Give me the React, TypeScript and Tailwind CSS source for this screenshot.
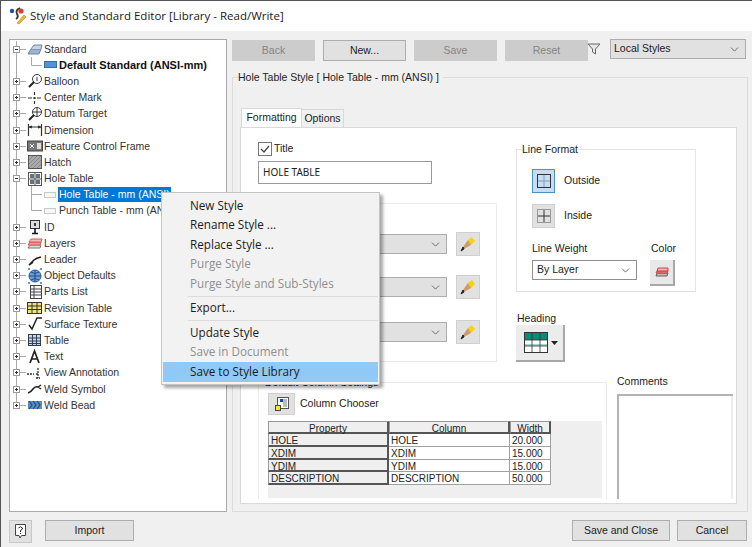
import { ChevronDown } from 'lucide-react';
import type { ReactNode } from 'react';

const ink = '#3a3a3a';

function Ico({ children, w = 16 }: { children: ReactNode; w?: number }) {
  return (
    <svg width={w} height="16" viewBox={`0 0 ${w} 16`} className="shrink-0" fill="none">
      {children}
    </svg>
  );
}

const treeIcons: Record<string, ReactNode> = {
  standard: (
    <>
      <path d="M1 13 L4 8 H14 L12 13 Z" fill="#9db4cc" stroke="#6f87a0" />
      <path d="M4 8 L7 4 H15 L14 8" fill="#c5d3e2" stroke="#6f87a0" />
    </>
  ),
  default: <rect x="0.5" y="4.5" width="12" height="6" fill="#4f94d4" stroke="#3a6ea5" />,
  balloon: (
    <>
      <circle cx="10" cy="6" r="4.5" fill="#fff" stroke={ink} />
      <path d="M10 4 V8" stroke={ink} />
      <path d="M7 9 L2 14" stroke="#222" strokeWidth="2" />
    </>
  ),
  center: <path d="M7.5 2 V5 M7.5 7 V9 M7.5 11 V14 M1 8 H5 M6 8 H9 M10 8 H14" stroke="#333" strokeWidth="1.2" />,
  datum: (
    <>
      <circle cx="10" cy="6" r="4.5" fill="#fff" stroke={ink} />
      <path d="M5.5 6 H14.5 M10 1.5 V10.5" stroke={ink} />
      <path d="M7 9 L2 14" stroke="#222" strokeWidth="2" />
    </>
  ),
  dimension: <path d="M1.5 2 V14 M14.5 2 V14 M2 5 H14 M2 5 L5 4 M2 5 L5 6 M14 5 L11 4 M14 5 L11 6" stroke="#333" strokeWidth="1.2" />,
  fcf: (
    <>
      <rect x="0.5" y="3" width="15" height="10" fill="#777" stroke="#444" />
      <path d="M3 6 L7 10 M7 6 L3 10" stroke="#fff" />
      <rect x="10" y="5" width="4" height="6" fill="#ddd" />
    </>
  ),
  hatch: (
    <>
      <rect x="1.5" y="1.5" width="13" height="13" fill="#aaa" stroke="#555" />
      <path d="M2 6 L6 2 M2 10 L10 2 M2 14 L14 2 M6 14 L14 6 M10 14 L14 10" stroke="#888" />
    </>
  ),
  hole: (
    <>
      <rect x="1.5" y="1.5" width="13" height="13" fill="#fff" stroke="#555" />
      <path d="M8 2 V14 M2 8 H14" stroke="#555" />
      <path d="M3 4 H7 M3 6 H7 M9 4 H13 M9 6 H13 M3 10 H7 M3 12 H7 M9 10 H13 M9 12 H13" stroke="#345" strokeWidth="1.3" />
    </>
  ),
  sub: <rect x="0.5" y="5.5" width="11" height="5" fill="#f6f6f6" stroke="#c9c9c9" />,
  id: (
    <>
      <rect x="3.5" y="1.5" width="9" height="8" fill="#ddd" stroke="#333" />
      <path d="M8 4 V7 M8 9 V14 M5 14.5 H11" stroke="#111" strokeWidth="1.6" />
    </>
  ),
  layers: (
    <>
      <path d="M1 13 L3 10 H14 L13 13 Z" fill="#ddd" stroke="#777" />
      <path d="M1 10 L3 7 H14 L13 10 Z" fill="#ee9a9a" stroke="#d55" />
      <path d="M2 7 L4 4 H15 L14 7 Z" fill="#f3b9b9" stroke="#d55" />
    </>
  ),
  leader: <path d="M2 13 Q5 10 7 8 T14 5 M2 13 L6 10" stroke="#222" strokeWidth="1.6" />,
  object: (
    <>
      <circle cx="8" cy="8" r="6" fill="#6d9fd6" stroke="#2c5f9e" />
      <path d="M2 8 H14 M8 2 V14 M4 4 Q8 7 12 4 M4 12 Q8 9 12 12" stroke="#244e85" />
      <path d="M1 1 H3 M13 1 H15 M1 15 H3 M13 15 H15" stroke="#3d78c0" strokeWidth="1.5" />
    </>
  ),
  parts: (
    <>
      <rect x="3.5" y="1.5" width="11" height="13" fill="#fff" stroke="#444" />
      <path d="M3 5 H15 M3 8 H15 M3 11 H15 M7 2 V14" stroke="#444" />
    </>
  ),
  revision: (
    <>
      <rect x="0.5" y="2.5" width="14" height="11" fill="#f3e27a" stroke="#333" />
      <path d="M1 6 H14 M1 9.5 H14 M5 3 V13 M10 3 V13" stroke="#333" />
    </>
  ),
  surface: <path d="M2 9 L5 13 L10 2 H15" stroke="#222" strokeWidth="1.5" />,
  table: (
    <>
      <rect x="1.5" y="2.5" width="12" height="11" fill="#cfd8e6" stroke="#2f3f55" />
      <path d="M2 6 H13 M2 9 H13 M2 11.5 H13 M5.5 3 V13 M9.5 3 V13" stroke="#2f3f55" />
    </>
  ),
  text: <path d="M3 14 L7.5 2 L12 14 M5 10 H10" stroke="#222" strokeWidth="1.7" />,
  view: <path d="M0 9 H7 M9 9 H11 M11 3 V13 M9 13 H13" stroke="#333" strokeDasharray="2 1" strokeWidth="1.3" />,
  weld: <path d="M1 12 Q4 11 6 8 T11 6 L14 4 M11 6 L14 8" stroke="#222" strokeWidth="1.5" />,
  bead: (
    <>
      <rect x="1" y="4" width="14" height="8" fill="#5b8bbf" />
      <path d="M2 4 L5 8 L2 12 M6 4 L9 8 L6 12 M10 4 L13 8 L10 12" stroke="#1f4d80" strokeWidth="1.2" />
    </>
  ),
};

const treeRows = [
  { label: 'Standard', icon: 'standard', open: true },
  { label: 'Default Standard (ANSI-mm)', icon: 'default', child: true, bold: true },
  { label: 'Balloon', icon: 'balloon' },
  { label: 'Center Mark', icon: 'center' },
  { label: 'Datum Target', icon: 'datum' },
  { label: 'Dimension', icon: 'dimension' },
  { label: 'Feature Control Frame', icon: 'fcf' },
  { label: 'Hatch', icon: 'hatch' },
  { label: 'Hole Table', icon: 'hole', open: true },
  { label: 'Hole Table - mm (ANSI)', icon: 'sub', child: true, selected: true, more: true },
  { label: 'Punch Table - mm (ANSI)', icon: 'sub', child: true, lastChild: true },
  { label: 'ID', icon: 'id' },
  { label: 'Layers', icon: 'layers' },
  { label: 'Leader', icon: 'leader' },
  { label: 'Object Defaults', icon: 'object' },
  { label: 'Parts List', icon: 'parts' },
  { label: 'Revision Table', icon: 'revision' },
  { label: 'Surface Texture', icon: 'surface' },
  { label: 'Table', icon: 'table' },
  { label: 'Text', icon: 'text' },
  { label: 'View Annotation', icon: 'view' },
  { label: 'Weld Symbol', icon: 'weld' },
  { label: 'Weld Bead', icon: 'bead', last: true },
];

type TreeRowData = (typeof treeRows)[number] & {
  open?: boolean;
  child?: boolean;
  bold?: boolean;
  selected?: boolean;
  more?: boolean;
  last?: boolean;
  lastChild?: boolean;
};

function TreeRow({ row }: { row: TreeRowData }) {
  return (
    <div className="flex h-[16.2px] items-center">
      {row.child ? (
        <svg width="33" height="17" viewBox="0 0 33 17" className="shrink-0" fill="none">
          <path d="M6.5 0 V17" stroke="#a9a9a9" />
          <path d={`M21.5 0 V${row.lastChild || row.bold ? 8.5 : 17} M21.5 8.5 H32`} stroke="#a9a9a9" />
        </svg>
      ) : (
        <svg width="17" height="17" viewBox="0 0 17 17" className="shrink-0" fill="none">
          <path d={row.last ? 'M6.5 0 V8.5 M9.5 8.5 H16' : 'M6.5 0 V17 M9.5 8.5 H16'} stroke="#a9a9a9" />
          <rect x="3.5" y="5.5" width="6" height="6" fill="#fff" stroke="#9a9a9a" />
          <path d={row.open ? 'M5 8.5 H8' : 'M5 8.5 H8 M6.5 7 V10'} stroke="#333" />
        </svg>
      )}
      {row.child ? (
        <span className="ml-[1px] mr-[1px] w-[13px]">
          <Ico w={13}>{treeIcons[row.icon]}</Ico>
        </span>
      ) : (
        <Ico>{treeIcons[row.icon]}</Ico>
      )}
      <span
        className={`whitespace-nowrap px-[1px] leading-[15px] ${row.bold ? 'text-[11px] font-bold text-[#111]' : 'text-[10.5px] text-[#333]'} ${row.selected ? 'bg-[#0078d7] text-white' : ''}`}
      >
        {row.label}
      </span>
    </div>
  );
}

function TopButton({ label, enabled }: { label: string; enabled?: boolean }) {
  return (
    <button
      className={`flex h-[21px] w-[83px] items-center justify-center border text-[10.5px] ${enabled ? 'border-[#adadad] bg-[#e1e1e1] text-[#222]' : 'border-[#cccccc] bg-[#cccccc] text-[#858585]'}`}
    >
      {label}
    </button>
  );
}

function Btn({ label, className }: { label: string; className: string }) {
  return (
    <button className={`flex h-[21px] items-center justify-center border border-[#adadad] bg-[#e1e1e1] text-[10.5px] text-[#222] ${className}`}>
      {label}
    </button>
  );
}

function Pencil() {
  return (
    <button className="flex h-[24px] w-[24px] items-center justify-center border border-[#d0d0d0] bg-[#e1e1e1]">
      <svg width="16" height="16" viewBox="0 0 16 16" fill="none">
        <path d="M8 4 L12 1 L15 5 L11 9 Z" fill="#f7d500" />
        <path d="M8 4 L11 9 L4 13 L3 11 Z" fill="#cf9a6b" />
        <path d="M3 11 L4 13 L1 15 Z" fill="#222" stroke="#222" />
      </svg>
    </button>
  );
}

function GreyDropdown() {
  return (
    <div className="flex h-[20px] w-[68px] items-center justify-end border border-[#adadad] bg-[#e1e1e1] pr-[4px]">
      <ChevronDown size={13} strokeWidth={1.5} className="text-[#555]" />
    </div>
  );
}

function GridIcon({ inside }: { inside?: boolean }) {
  return (
    <svg width="16" height="16" viewBox="0 0 16 16" fill="none">
      <rect x="1.5" y="1.5" width="13" height="13" stroke={inside ? '#9a9a9a' : '#333'} />
      <path d="M8 2 V14 M2 8 H14" stroke={inside ? '#333' : '#8b9db0'} />
    </svg>
  );
}

const columnRows = [
  ['HOLE', 'HOLE', '20.000'],
  ['XDIM', 'XDIM', '15.000'],
  ['YDIM', 'YDIM', '15.000'],
  ['DESCRIPTION', 'DESCRIPTION', '50.000'],
];

function ColumnTable() {
  return (
    <div className="h-[77px] w-[334px] bg-[#efefef]">
      <div className="grid w-[283px] grid-cols-[121px_121px_41px] text-[10px] leading-[14px] text-[#222]">
        {['Property', 'Column', 'Width'].map((h) => (
          <div key={h} className="h-[13px] border-b-2 border-r-2 border-t border-l border-b-[#555] border-r-[#555] border-t-[#999] border-l-[#999] bg-[#efefef] text-center">
            {h}
          </div>
        ))}
        {columnRows.map((row) => (
          <div key={row[0]} className="contents">
            <div className="h-[12.75px] border-b-2 border-r-2 border-l border-b-[#555] border-r-[#555] border-l-[#999] bg-[#efefef] pl-[2px]">{row[0]}</div>
            <div className="h-[12.75px] border-b border-r border-[#a0a0a0] bg-white pl-[2px]">{row[1]}</div>
            <div className="h-[12.75px] border-b border-r border-[#a0a0a0] bg-white pl-[2px]">{row[2]}</div>
          </div>
        ))}
      </div>
    </div>
  );
}

const menuItems = ['New Style', 'Rename Style ...', 'Replace Style ...'];

function MenuItem({ label, disabled }: { label: string; disabled?: boolean }) {
  return (
    <div className={`flex h-[19.5px] items-center pl-[27px] text-[11.7px] ${disabled ? 'text-[#8f8f8f]' : 'text-[#1c1c1c]'}`}>{label}</div>
  );
}

function MenuSep() {
  return <div className="my-[2px] ml-[25px] h-px bg-[#dcdcdc]" />;
}

function ContextMenu() {
  return (
    <div className="absolute left-[160px] top-[191px] w-[219px] border border-[#c4c4c4] bg-[#f2f2f2] pb-[2px] pl-[1px] pr-[1px] pt-[3px] shadow-[3px_3px_3px_rgba(0,0,0,0.35)]" style={{ fontFamily: '"Open Sans", sans-serif' }}>
      {menuItems.map((m) => (
        <MenuItem key={m} label={m} />
      ))}
      <MenuItem label="Purge Style" disabled />
      <MenuItem label="Purge Style and Sub-Styles" disabled />
      <MenuSep />
      <MenuItem label="Export..." />
      <MenuSep />
      <MenuItem label="Update Style" />
      <MenuItem label="Save in Document" disabled />
      <div className="flex h-[19.5px] items-center bg-[#90c8f6] pl-[27px] text-[11.7px] text-[#1c1c1c]">Save to Style Library</div>
    </div>
  );
}

export default function App() {
  return (
    <div className="relative flex h-[547px] w-[752px] flex-col overflow-hidden border-l border-t border-[#555] bg-[#f0f0f0] text-[#222]" style={{ fontFamily: '"Liberation Sans", sans-serif' }}>
      <div className="flex h-[30px] items-center bg-white pl-[8px]">
        <svg width="18" height="20" viewBox="0 0 18 20" fill="none">
          <circle cx="3" cy="5" r="2.2" fill="#1f4e9c" />
          <path d="M11 2 Q6 4 8 8 Q10 11 7 13" stroke="#333" strokeWidth="1.8" />
          <circle cx="12" cy="5" r="2.6" fill="#e23b2e" />
          <path d="M8 17 L15 9 L17 11 L10 18 Z" fill="#f2b632" stroke="#b97f1b" strokeWidth="0.6" />
        </svg>
        <span className="ml-[3px] whitespace-nowrap text-[11.5px] text-[#1a1a1a]" style={{ fontFamily: '"Open Sans", sans-serif' }}>
          Style and Standard Editor [Library - Read/Write]
        </span>
      </div>

      <div className="flex h-[481px] pl-[8px] pt-[8px]">
        <div className="h-[473px] w-[218px] border border-[#a9a9a9] bg-white pt-[1px]">
          {treeRows.map((row) => (
            <TreeRow key={row.label} row={row as TreeRowData} />
          ))}
        </div>

        <div className="ml-[5px] w-[516px]">
          <div className="flex h-[23px] items-start">
            <div className="mt-[1px] flex gap-[8px]">
              <TopButton label="Back" />
              <TopButton label="New..." enabled />
              <TopButton label="Save" />
              <TopButton label="Reset" />
            </div>
            <svg width="14" height="14" viewBox="0 0 14 14" fill="none" className="ml-[-1px] mt-[3px]">
              <path d="M1 2 H13 L8.5 7 V12 L5.5 10 V7 Z" fill="#e8e8e8" stroke="#666" />
            </svg>
            <div className="ml-[9px] flex h-[20px] w-[136px] items-center justify-between border border-[#adadad] bg-[#e1e1e1] pl-[3px] pr-[4px] text-[10.5px]">
              Local Styles
              <ChevronDown size={13} strokeWidth={1.5} className="text-[#555]" />
            </div>
          </div>

          <fieldset className="mt-[8px] h-[442px] border border-[#dcdcdc] pl-[5px]">
            <legend className="h-[14px] pr-[4px] text-[10.5px] leading-[14px] text-[#222]">Hole Table Style [ Hole Table - mm (ANSI) ]</legend>

            <div className="ml-[2px] mt-[23px] flex h-[20px] items-end pl-[1px]">
              <div className="flex h-[19px] w-[61px] items-center justify-center border-x border-t border-[#d9d9d9] bg-white pb-[1px] text-[10.5px]">Formatting</div>
              <div className="flex h-[18px] w-[42px] items-center justify-center border-r border-t border-[#d9d9d9] text-[10.5px]">Options</div>
            </div>
            <div className="ml-[2px] h-[377px] w-[497px] border border-[#d9d9d9] bg-white">
              <div className="h-[371px] overflow-hidden pl-[17px] pt-[14px]">
                <div className="flex h-[233px]">
                  <div className="w-[239px]">
                    <div className="flex h-[14px] items-center">
                      <span className="flex h-[14px] w-[14px] items-center justify-center border border-[#777]">
                        <svg width="10" height="10" viewBox="0 0 10 10" fill="none">
                          <path d="M1 5 L4 8 L9 2" stroke="#444" strokeWidth="1.2" />
                        </svg>
                      </span>
                      <span className="ml-[2px] text-[10.5px]">Title</span>
                    </div>
                    <div className="mt-[5px] flex h-[23px] w-[174px] items-center border border-[#9a9a9a] pl-[4px] text-[10px]" style={{ fontFamily: '"Noto Sans", sans-serif' }}>HOLE TABLE</div>
                    <div className="mt-[19px] flex h-[159px] flex-col items-end border border-[#ececec] pr-[16px]">
                      <div className="mt-[28px] flex items-center gap-[9px]">
                        <GreyDropdown />
                        <Pencil />
                      </div>
                      <div className="mt-[19px] flex items-center gap-[9px]">
                        <GreyDropdown />
                        <Pencil />
                      </div>
                      <div className="mt-[21px] flex items-center gap-[9px]">
                        <GreyDropdown />
                        <Pencil />
                      </div>
                    </div>
                  </div>

                  <div className="ml-[19px] w-[180px]">
                    <fieldset className="h-[150px] border border-[#e4e4e4] pl-[5px]">
                      <legend className="h-[14px] text-[10.5px] leading-[14px]">Line Format</legend>
                      <div className="ml-[10px] mt-[13px] flex items-center">
                        <span className="flex h-[24px] w-[23px] items-center justify-center border border-[#4d90c8] bg-[#c5def5]">
                          <GridIcon />
                        </span>
                        <span className="ml-[9px] text-[10.5px]">Outside</span>
                      </div>
                      <div className="ml-[10px] mt-[11px] flex items-center">
                        <span className="flex h-[24px] w-[23px] items-center justify-center border border-[#cfcfcf] bg-[#e1e1e1]">
                          <GridIcon inside />
                        </span>
                        <span className="ml-[9px] text-[10.5px]">Inside</span>
                      </div>
                      <div className="ml-[10px] mt-[13px] flex">
                        <div className="w-[118px]">
                          <div className="h-[14px] text-[10.5px] leading-[14px]">Line Weight</div>
                          <div className="mt-[5px] flex h-[20px] w-[105px] items-center justify-between border border-[#8f8f8f] pl-[4px] pr-[4px] text-[10.5px]">
                            By Layer
                            <ChevronDown size={13} strokeWidth={1.5} className="text-[#555]" />
                          </div>
                        </div>
                        <div>
                          <div className="h-[14px] pl-[1px] text-[10.5px] leading-[14px]">Color</div>
                          <div className="mt-[5px] flex h-[26px] w-[25px] items-center justify-center border-b-2 border-r-2 border-[#a8a8a8] bg-[#e8e8e8]">
                            <svg width="14" height="12" viewBox="0 0 14 12" fill="none">
                              <path d="M1 10 L2 7 H13 L12 10 Z" fill="#bbb" stroke="#666" />
                              <path d="M1 7 L2 5 H13 L12 7 Z" fill="#e88" stroke="#c44" />
                              <path d="M2 5 L3 2 H13 L13 5 Z" fill="#f2b5b5" stroke="#c44" />
                            </svg>
                          </div>
                        </div>
                      </div>
                    </fieldset>
                    <div className="mt-[19px] h-[14px] pl-[1px] text-[10.5px] leading-[14px]">Heading</div>
                    <div className="flex h-[37px] w-[49px] items-center gap-[3px] border-b-2 border-r-2 border-[#a8a8a8] bg-[#ececec] pl-[8px]">
                      <svg width="24" height="22" viewBox="0 0 24 22" fill="none">
                        <rect x="0.5" y="0.5" width="23" height="20" fill="#fff" stroke="#333" />
                        <rect x="1" y="1" width="22" height="7" fill="#0c8a78" />
                        <rect x="1" y="12" width="22" height="2" fill="#9fd4cc" />
                        <path d="M8 1 V20 M16 1 V20 M1 8 H23 M1 14 H23" stroke="#333" strokeWidth="0.8" />
                      </svg>
                      <svg width="7" height="4" viewBox="0 0 7 4">
                        <path d="M0 0 H7 L3.5 4 Z" fill="#222" />
                      </svg>
                    </div>
                  </div>
                </div>

                <div className="flex">
                  <fieldset className="h-[130px] w-[349px] shrink-0 border border-[#ececec] pl-[6px]">
                    <legend className="h-[14px] text-[10.5px] leading-[14px]">Default Column Settings</legend>
                    <div className="ml-[3px] mt-[4px] flex items-center">
                      <span className="flex h-[22px] w-[27px] items-center justify-center border border-[#cfcfcf] bg-[#e1e1e1]">
                        <svg width="16" height="16" viewBox="0 0 16 16" fill="none">
                          <rect x="3.5" y="1.5" width="11" height="11" fill="#fff" stroke="#555" />
                          <rect x="6" y="3" width="3" height="3" fill="#1e40c8" />
                          <path d="M10 3 V11 M12 3 V11" stroke="#777" />
                          <rect x="1.5" y="9.5" width="5" height="5" fill="#f5e14a" stroke="#444" />
                        </svg>
                      </span>
                      <span className="ml-[5px] text-[10.5px]">Column Chooser</span>
                    </div>
                    <div className="ml-[3px] mt-[6px]">
                      <ColumnTable />
                    </div>
                  </fieldset>
                  <div className="ml-[10px] w-[116px] shrink-0">
                    <div className="mt-[-1px] h-[14px] text-[10.5px] leading-[14px]">Comments</div>
                    <div className="mt-[6px] h-[120px] border-l-2 border-t-2 border-l-[#b4b4b4] border-t-[#b4b4b4] bg-white">
                      <div className="ml-auto h-full w-[2px] bg-[#ececec]" />
                    </div>
                  </div>
                </div>
              </div>
            </div>
          </fieldset>
        </div>
      </div>

      <div className="mt-[8px] flex items-start pl-[8px]">
        <button className="flex h-[23px] w-[23px] items-center justify-center border border-[#c8c8c8] bg-[#e1e1e1]">
          <svg width="13" height="17" viewBox="0 0 13 17" fill="none">
            <path d="M1.5 1.5 H11.5 V12.5 H7.5 L6 15 L5 12.5 H1.5 Z" fill="#fff" stroke="#444" />
            <path d="M4.5 5 Q6.5 2.5 8.5 5 Q8.5 6.5 6.5 7.5 V9 M6.5 10 V11" stroke="#222" />
          </svg>
        </button>
        <Btn label="Import" className="ml-[13px] w-[89px]" />
        <Btn label="Save and Close" className="ml-[438px] w-[98px]" />
        <Btn label="Cancel" className="ml-[7px] w-[70px]" />
      </div>

      <ContextMenu />
    </div>
  );
}
